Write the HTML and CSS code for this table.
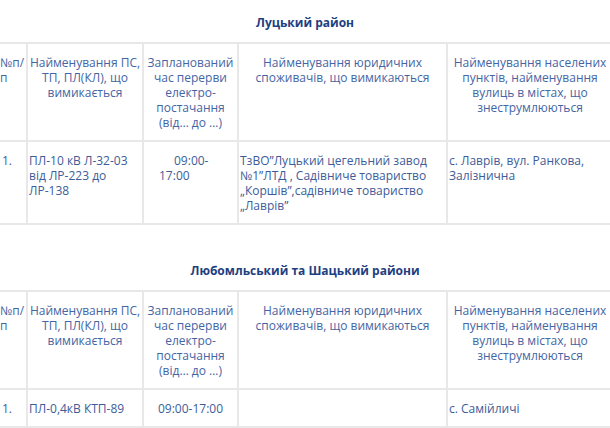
FILE: index.html
```html
<!DOCTYPE html>
<html lang="uk">
<head>
<meta charset="utf-8">
<title>Графік відключень</title>
<link rel="stylesheet" href="styles.css">
</head>
<body>
<div class="page">
  <section class="district first">
    <h3 class="district-title">Луцький район</h3>
    <table class="outages">
      <colgroup>
        <col class="c-num"><col class="c-line"><col class="c-time"><col class="c-legal"><col class="c-places">
      </colgroup>
      <tr class="head">
        <td class="num">№п/<br>п</td>
        <td>Найменування ПС, ТП, ПЛ(КЛ), що вимикається</td>
        <td>Запланований час перерви електро-постачання (від… до …)</td>
        <td>Найменування юридичних споживачів, що вимикаються</td>
        <td>Найменування населених пунктів, найменування вулиць в містах, що знеструмлюються</td>
      </tr>
      <tr class="row">
        <td class="num">1.</td>
        <td>ПЛ-10 кВ Л-32-03 від ЛР-223 до ЛР-138</td>
        <td class="time-indent">09:00-<br>17:00</td>
        <td>ТзВО”Луцький цегельний завод №1”ЛТД , Садівниче товариство „Коршів”,садівниче товариство „Лаврів”</td>
        <td>с. Лаврів, вул. Ранкова, Залізнична</td>
      </tr>
    </table>
  </section>
  <section class="district second">
    <h3 class="district-title">Любомльський та Шацький райони</h3>
    <table class="outages">
      <colgroup>
        <col class="c-num"><col class="c-line"><col class="c-time"><col class="c-legal"><col class="c-places">
      </colgroup>
      <tr class="head">
        <td class="num">№п/<br>п</td>
        <td>Найменування ПС, ТП, ПЛ(КЛ), що вимикається</td>
        <td>Запланований час перерви електро-постачання (від… до …)</td>
        <td>Найменування юридичних споживачів, що вимикаються</td>
        <td>Найменування населених пунктів, найменування вулиць в містах, що знеструмлюються</td>
      </tr>
      <tr class="row">
        <td class="num">1.</td>
        <td>ПЛ-0,4кВ КТП-89</td>
        <td class="time-center">09:00-17:00</td>
        <td></td>
        <td>с. Самійличі</td>
      </tr>
    </table>
  </section>
</div>
</body>
</html>
```

FILE: styles.css
```css
html, body {
  margin: 0;
  padding: 0;
  background: #ffffff;
  overflow: hidden;
}

body {
  font-family: "Open Sans", "Noto Sans", sans-serif;
  font-size: 12px;
  line-height: 15px;
  color: #3d5c98;
}

.page {
  width: 610px;
}

.district-title {
  margin: 0 0 12px;
  font-size: 12px;
  line-height: 15px;
  font-weight: 700;
  color: #1e4080;
  text-align: center;
}

.district.first {
  padding-top: 15px;
}

.district.second {
  padding-top: 38px;
}

.outages {
  table-layout: fixed;
  border-collapse: separate;
  border-spacing: 0;
  width: 616px;
  margin-left: -2px;
  border-right: 2px solid #e8e8e8;
  border-bottom: 2px solid #e8e8e8;
}

.c-num { width: 28px; }
.c-line { width: 116px; }
.c-time { width: 95px; }
.c-legal { width: 209px; }
.c-places { width: 166px; }

.outages td {
  border-left: 2px solid #e8e8e8;
  border-top: 2px solid #e8e8e8;
  padding: 11px 1px 10px;
  vertical-align: top;
  overflow-wrap: normal;
}

.head td {
  text-align: center;
  color: #4465a3;
}

.head td.num {
  text-align: left;
  padding-left: 0;
  padding-right: 0;
  white-space: nowrap;
}

.row td {
  text-align: left;
}

.row td.num {
  padding-left: 2px;
}

.row td.time-indent {
  padding-left: 15px;
  text-indent: 15px;
}

.row td.time-center {
  text-align: center;
}
```
